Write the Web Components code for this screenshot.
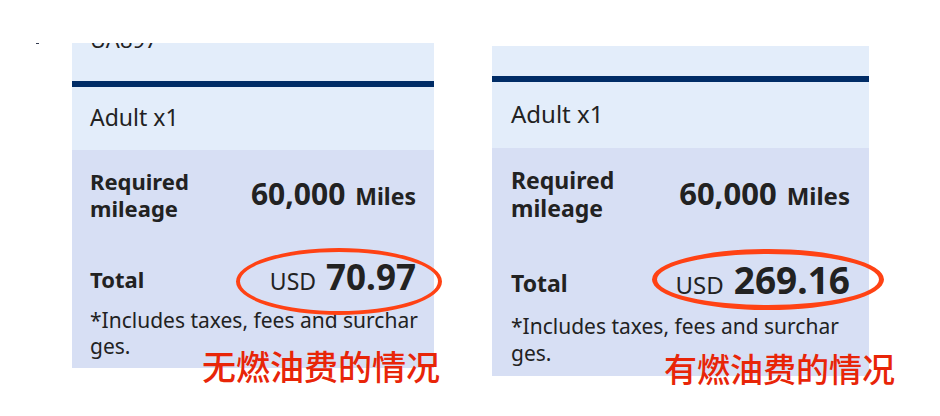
<!DOCTYPE html>
<html lang="en">
<head>
<meta charset="utf-8">
<title>Award fare comparison</title>
<style>
body { margin: 0; min-height: 100vh; background: #fff; color: #222; font-family: "Noto Sans", "Noto Sans CJK SC", sans-serif; }
</style>
</head>
<body>
<fare-comparison>
  <fare-card flight="UA897" passenger="Adult x1" miles="60,000" amount="70.97">无燃油费的情况</fare-card>
  <fare-card class="surcharged" passenger="Adult x1" miles="60,000" amount="269.16">有燃油费的情况</fare-card>
</fare-comparison>
<script>
class FareComparison extends HTMLElement {
  constructor() {
    super();
    this.attachShadow({ mode: "open" }).innerHTML = `
      <style>
        :host { display: block; position: relative; }
        main { display: grid; grid-template-columns: minmax(0, 362fr) minmax(0, 377fr); column-gap: 58px; align-items: start; padding: 43px 71px 32px 72px; }
        .tick { position: absolute; left: 36px; top: 43px; width: 3px; height: 1px; background: #333a50; }
        ::slotted(.surcharged) {
          margin-top: 3px;
          --strip: 30px; --passenger: 66px; --passenger-size: 24px; --label: 23px; --label-line: 28px; --note-line: 27px;
          --inset: 19px; --miles: 31px; --price: 37px; --unit: 24px; --total-gap: 38px; --total-end: 8px;
          --ring-x: 160px; --ring-right: -15px; --ring-y: 101px; --ring-h: 61px; --ring-line: 5px;
          --caption: 33px; --caption-right: -26px; --caption-bottom: -14px;
        }
      </style>
      <span class="tick"></span>
      <main><slot></slot></main>`;
  }
}
class FareCard extends HTMLElement {
  constructor() {
    super();
    const value = name => this.getAttribute(name) || "";
    this.attachShadow({ mode: "open" }).innerHTML = `
      <style>
        :host { display: block; position: relative; background: #e3edfa; line-height: 28px; }
        header { height: var(--strip, 38px); overflow: hidden; border-bottom: 6px solid #002c66; }
        header span { display: block; margin-top: -18px; padding-left: 18px; font-size: 22px; line-height: 28px; }
        .passenger { box-sizing: border-box; height: var(--passenger, 63px); display: flex; align-items: center; padding: 0 var(--inset, 18px) 3px; font-size: var(--passenger-size, 23px); }
        .details { background: #d7dff4; padding: 18px var(--inset, 18px) 9px; }
        dl { margin: 0; }
        dl div { display: flex; justify-content: space-between; align-items: center; }
        dl div.total { padding: var(--total-gap, 35px) 0 var(--total-end, 6px); }
        dt { width: min-content; font-size: var(--label, 22px); line-height: var(--label-line, 27px); font-weight: 700; }
        dd { margin: 0; display: flex; align-items: baseline; gap: 10px; white-space: nowrap; font-size: var(--unit, 23px); line-height: 40px; }
        b { font-weight: 700; }
        .miles { font-weight: 700; }
        .miles b { font-size: var(--miles, 30px); }
        .price b { font-size: var(--price, 35px); }
        p { margin: 0; font-size: 21px; line-height: var(--note-line, 26px); white-space: nowrap; }
        .ring { position: absolute; box-sizing: border-box; left: var(--ring-x, 164px); right: var(--ring-right, -8px);
          top: calc(var(--strip, 38px) + 6px + var(--passenger, 63px) + var(--ring-y, 98px)); height: var(--ring-h, 67px);
          border: var(--ring-line, 4px) solid #ff4214; border-radius: 50%; }
        .caption { position: absolute; right: var(--caption-right, -6px); bottom: var(--caption-bottom, -20px);
          color: #e82508; font-family: "Noto Sans CJK SC", sans-serif; font-size: var(--caption, 34px); font-weight: 500; line-height: 44px; white-space: nowrap; }
      </style>
      <header><span>${value("flight")}</span></header>
      <div class="passenger">${value("passenger")}</div>
      <section class="details">
        <dl>
          <div><dt>Required mileage</dt><dd class="miles"><b>${value("miles")}</b> <span>Miles</span></dd></div>
          <div class="total"><dt>Total</dt><dd class="price"><span>USD</span> <b>${value("amount")}</b></dd></div>
        </dl>
        <p>*Includes taxes, fees and surchar<br>ges.</p>
      </section>
      <span class="ring"></span>
      <div class="caption" lang="zh-CN"><slot></slot></div>`;
  }
}
customElements.define("fare-card", FareCard);
customElements.define("fare-comparison", FareComparison);
</script>
</body>
</html>
